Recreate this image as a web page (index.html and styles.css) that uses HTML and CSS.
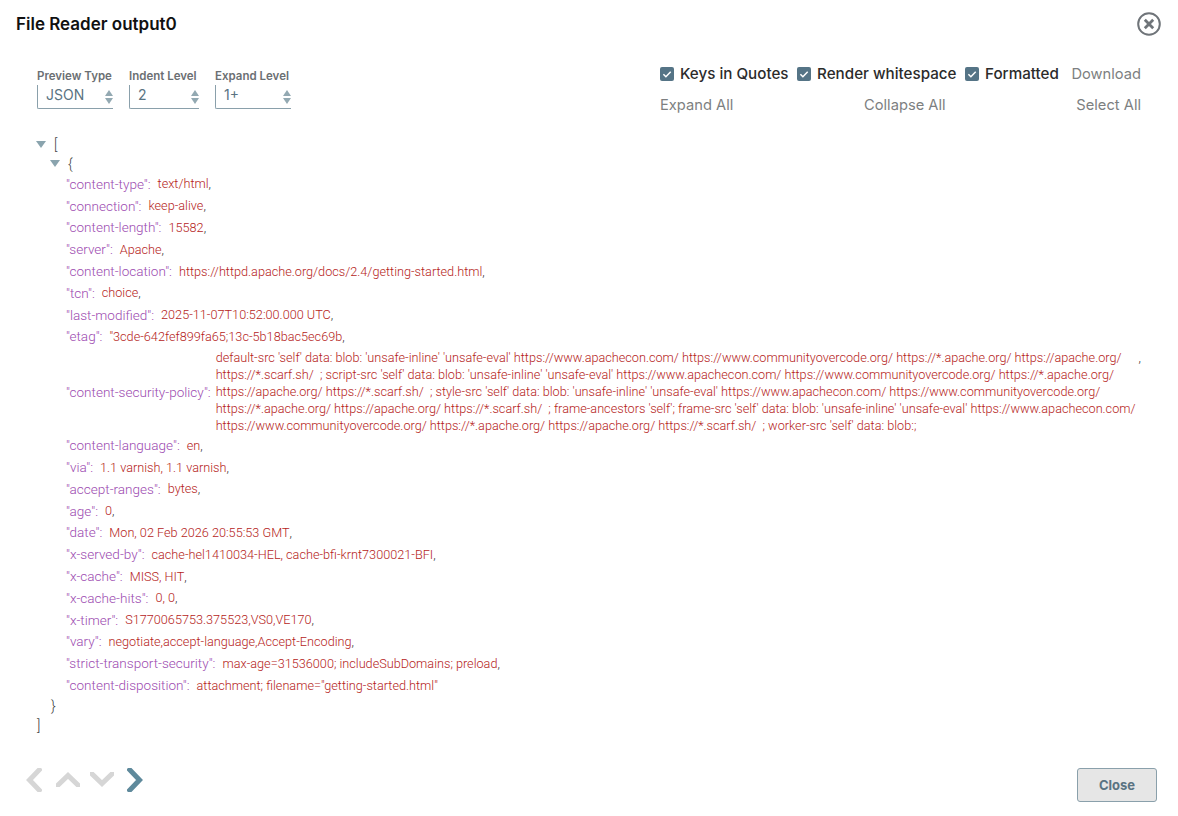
FILE: index.html
```html
<!DOCTYPE html>
<html lang="en">
<head>
  <meta charset="UTF-8">
  <title>File Reader output0</title>
  <link rel="stylesheet" href="styles.css">
</head>
<body>

  <!-- Title bar -->
  <header class="title-bar">
    <h1>File Reader output0</h1>
    <svg class="close-icon" width="26" height="26" viewBox="0 0 26 26" fill="none" stroke="#6f7479">
      <circle cx="13" cy="13" r="10.8" stroke-width="2"/>
      <path d="M8.8 8.8l8.4 8.4M17.2 8.8l-8.4 8.4" stroke-width="2.8"/>
    </svg>
  </header>

  <!-- Preview options -->
  <section class="toolbar">
    <div class="selects">
      <div class="select-group type-group">
        <label>Preview Type</label>
        <div class="select-box"><span class="select-value">JSON</span><span class="spinner"><i class="up"></i><i class="down"></i></span></div>
      </div>
      <div class="select-group indent-group">
        <label>Indent Level</label>
        <div class="select-box"><span class="select-value">2</span><span class="spinner"><i class="up"></i><i class="down"></i></span></div>
      </div>
      <div class="select-group expand-group">
        <label>Expand Level</label>
        <div class="select-box"><span class="select-value">1+</span><span class="spinner"><i class="up"></i><i class="down"></i></span></div>
      </div>
    </div>

    <div class="actions">
      <div class="action-row checks">
        <span class="check"><svg class="checkbox" width="14" height="14" viewBox="0 0 14 14"><rect width="14" height="14" rx="2" fill="#557486"/><path d="M3.4 7.2l2.5 2.5 4.8-5" fill="none" stroke="#fff" stroke-width="1.5"/></svg>Keys in Quotes</span>
        <span class="check"><svg class="checkbox" width="14" height="14" viewBox="0 0 14 14"><rect width="14" height="14" rx="2" fill="#557486"/><path d="M3.4 7.2l2.5 2.5 4.8-5" fill="none" stroke="#fff" stroke-width="1.5"/></svg>Render whitespace</span>
        <span class="check"><svg class="checkbox" width="14" height="14" viewBox="0 0 14 14"><rect width="14" height="14" rx="2" fill="#557486"/><path d="M3.4 7.2l2.5 2.5 4.8-5" fill="none" stroke="#fff" stroke-width="1.5"/></svg>Formatted</span>
        <a class="link">Download</a>
      </div>
      <div class="action-row links">
        <a class="link">Expand All</a>
        <a class="link">Collapse All</a>
        <a class="link">Select All</a>
      </div>
    </div>
  </section>

  <!-- JSON tree -->
  <main class="tree">
    <div class="bracket-line"><i class="caret"></i><span>[</span></div>
    <div class="bracket-line level2"><i class="caret"></i><span>{</span></div>

    <div class="row"><span class="key">"content-type":</span><span class="val">text/html</span>,</div>
    <div class="row"><span class="key">"connection":</span><span class="val">keep-alive</span>,</div>
    <div class="row"><span class="key">"content-length":</span><span class="val">15582</span>,</div>
    <div class="row"><span class="key">"server":</span><span class="val">Apache</span>,</div>
    <div class="row"><span class="key">"content-location":</span><span class="val">https://httpd.apache.org/docs/2.4/getting-started.html</span>,</div>
    <div class="row"><span class="key">"tcn":</span><span class="val">choice</span>,</div>
    <div class="row"><span class="key">"last-modified":</span><span class="val">2025-11-07T10:52:00.000 UTC</span>,</div>
    <div class="row"><span class="key">"etag":</span><span class="val">"3cde-642fef899fa65;13c-5b18bac5ec69b</span>,</div>

    <div class="row policy-row">
      <span class="key">"content-security-policy":</span>
      <span class="val policy">default-src 'self' data: blob: 'unsafe-inline' 'unsafe-eval' https://www.apachecon.com/ https://www.communityovercode.org/ https://*.apache.org/ https://apache.org/<br>https://*.scarf.sh/ &nbsp;; script-src 'self' data: blob: 'unsafe-inline' 'unsafe-eval' https://www.apachecon.com/ https://www.communityovercode.org/ https://*.apache.org/<br>https://apache.org/ https://*.scarf.sh/ &nbsp;; style-src 'self' data: blob: 'unsafe-inline' 'unsafe-eval' https://www.apachecon.com/ https://www.communityovercode.org/<br>https://*.apache.org/ https://apache.org/ https://*.scarf.sh/ &nbsp;; frame-ancestors 'self'; frame-src 'self' data: blob: 'unsafe-inline' 'unsafe-eval' https://www.apachecon.com/<br>https://www.communityovercode.org/ https://*.apache.org/ https://apache.org/ https://*.scarf.sh/ &nbsp;; worker-src 'self' data: blob:;</span>
      <span class="policy-comma">,</span>
    </div>

    <div class="row"><span class="key">"content-language":</span><span class="val">en</span>,</div>
    <div class="row"><span class="key">"via":</span><span class="val">1.1 varnish, 1.1 varnish</span>,</div>
    <div class="row"><span class="key">"accept-ranges":</span><span class="val">bytes</span>,</div>
    <div class="row"><span class="key">"age":</span><span class="val">0</span>,</div>
    <div class="row"><span class="key">"date":</span><span class="val">Mon, 02 Feb 2026 20:55:53 GMT</span>,</div>
    <div class="row"><span class="key">"x-served-by":</span><span class="val">cache-hel1410034-HEL, cache-bfi-krnt7300021-BFI</span>,</div>
    <div class="row"><span class="key">"x-cache":</span><span class="val">MISS, HIT</span>,</div>
    <div class="row"><span class="key">"x-cache-hits":</span><span class="val">0, 0</span>,</div>
    <div class="row"><span class="key">"x-timer":</span><span class="val">S1770065753.375523,VS0,VE170</span>,</div>
    <div class="row"><span class="key">"vary":</span><span class="val">negotiate,accept-language,Accept-Encoding</span>,</div>
    <div class="row"><span class="key">"strict-transport-security":</span><span class="val">max-age=31536000; includeSubDomains; preload</span>,</div>
    <div class="row"><span class="key">"content-disposition":</span><span class="val">attachment; filename="getting-started.html"</span></div>

    <div class="closing level2">}</div>
    <div class="closing">]</div>
  </main>

  <!-- Navigation and close -->
  <footer class="footer">
    <div class="nav-arrows">
      <svg class="arrow-prev" width="16" height="24" viewBox="0 0 16 24" fill="none" stroke="#d6d6d6" stroke-width="5"><path d="M15 0L3.5 12 15 24"/></svg>
      <svg class="arrow-up" width="24" height="15" viewBox="0 0 24 15" fill="none" stroke="#d6d6d6" stroke-width="5"><path d="M0 15L12 3.5 24 15"/></svg>
      <svg class="arrow-down" width="24" height="15" viewBox="0 0 24 15" fill="none" stroke="#d6d6d6" stroke-width="5"><path d="M0 0l12 11.5L24 0"/></svg>
      <svg class="arrow-next" width="16" height="24" viewBox="0 0 16 24" fill="none" stroke="#5f8a9c" stroke-width="5"><path d="M1 0l11.5 12L1 24"/></svg>
    </div>
    <button class="close-btn">Close</button>
  </footer>

</body>
</html>
```

FILE: styles.css
```css
/* Page */
body {
  margin: 0;
  width: 1178px;
  height: 816px;
  overflow: hidden;
  background: #ffffff;
  font-family: Inter, "Open Sans", sans-serif;
  color: #222;
}

/* Title bar */
.title-bar {
  display: flex;
  justify-content: space-between;
  align-items: flex-start;
  padding: 11px 16px 0 16px;
  height: 43px;
}
.title-bar h1 {
  margin: 3px 0 0 0;
  font-size: 17px;
  line-height: 20px;
  font-weight: 600;
  color: #111;
}

/* Toolbar */
.toolbar {
  display: flex;
  justify-content: space-between;
  padding: 0 37px 0 37px;
  height: 81px;
}
.selects {
  display: flex;
  gap: 16px;
  padding-top: 15px;
}
.select-group label {
  display: block;
  font-size: 11.5px;
  line-height: 14px;
  font-weight: 600;
  color: #6b6f73;
  white-space: nowrap;
}
.type-group { width: 76px; }
.indent-group { width: 70px; }
.expand-group { width: 76px; }
.select-box {
  display: flex;
  justify-content: space-between;
  align-items: center;
  height: 23px;
  margin-top: 2px;
  border-left: 1px solid #8aa0ab;
  border-bottom: 1px solid #8aa0ab;
  border-bottom-left-radius: 2px;
  padding-left: 8px;
}
.select-value {
  font-size: 14px;
  color: #5a7382;
  padding-bottom: 4px;
}
.spinner {
  display: flex;
  flex-direction: column;
  gap: 2px;
}
.spinner i {
  display: block;
  width: 0;
  height: 0;
  border-left: 4px solid transparent;
  border-right: 4px solid transparent;
}
.spinner .up { border-bottom: 6px solid #93a9b2; }
.spinner .down { border-top: 6px solid #93a9b2; }

/* Checkboxes and links */
.actions {
  width: 481px;
  padding-top: 4px;
}
.action-row {
  display: flex;
  justify-content: space-between;
  align-items: center;
  height: 31px;
  white-space: nowrap;
}
.action-row.checks { justify-content: flex-start; }
.check {
  display: flex;
  align-items: center;
  font-size: 15.2px;
  font-weight: 500;
  color: #2b2b2b;
  margin-right: 8.5px;
}
.checkbox {
  margin-right: 6px;
}
.link {
  font-size: 14.7px;
  color: #7d7f81;
}
.checks .link { margin-left: auto; }

/* JSON tree */
.tree {
  font-family: Roboto, "Open Sans", sans-serif;
  font-size: 12.68px;
  font-weight: 300;
  color: #333;
  padding-left: 36px;
}
.bracket-line {
  display: flex;
  align-items: center;
  height: 19px;
  font-size: 14px;
  color: #444;
}
.bracket-line.level2 {
  padding-left: 14px;
}
.caret {
  width: 0;
  height: 0;
  border-left: 5px solid transparent;
  border-right: 5px solid transparent;
  border-top: 7px solid #8aa4ae;
  margin-right: 8px;
}
.row {
  display: flex;
  align-items: center;
  height: 21.8px;
  padding-left: 30px;
  white-space: nowrap;
}
.key {
  color: #9c4ab0;
  margin-right: 7px;
  font-size: 13.55px;
}
.val {
  color: #b51c1a;
}
.policy-row {
  height: auto;
  padding: 3px 0 0 30px;
}
.policy-row .key {
  margin-right: 5px;
}
.policy {
  line-height: 16.8px;
}
.policy-comma {
  align-self: flex-start;
  margin-left: 3px;
}
.closing {
  height: 20px;
  line-height: 20px;
  font-size: 14px;
  color: #444;
  padding-left: 1px;
}
.closing.level2 { padding-left: 15px; }

/* Footer */
.footer {
  display: flex;
  justify-content: space-between;
  align-items: flex-start;
  padding: 32px 21px 0 26px;
}
.nav-arrows {
  display: flex;
  align-items: center;
  height: 24px;
}
.arrow-up { margin-left: 14px; }
.arrow-down { margin-left: 10px; }
.arrow-next { margin-left: 13px; }
.close-btn {
  width: 80px;
  height: 34px;
  background: #e6e6e6;
  border: 1px solid #8aa0ab;
  border-radius: 3px;
  font-family: Inter, sans-serif;
  font-size: 13px;
  font-weight: 700;
  color: #5a7382;
}
```
